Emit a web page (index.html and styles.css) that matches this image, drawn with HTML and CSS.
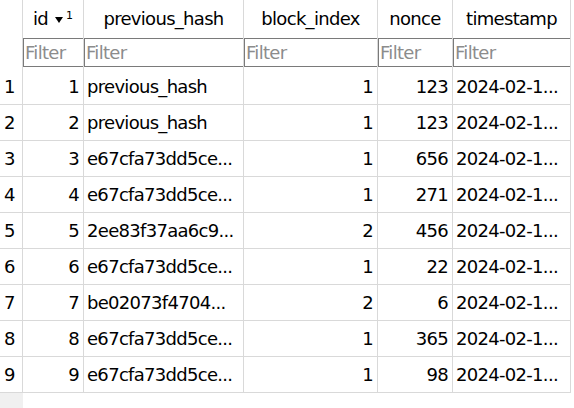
FILE: index.html
```html
<!DOCTYPE html>
<html>
<head>
<meta charset="utf-8">
<link rel="stylesheet" href="styles.css">
</head>
<body>
<div class="grid">
  <div class="row head">
    <div class="c c0"></div>
    <div class="c c1 hc">id <svg class="sort" width="8" height="6" viewBox="0 0 8 6"><path d="M0 0H8L4 6Z" fill="#000"/></svg><span class="sup">1</span></div>
    <div class="c c2 hc">previous_hash</div>
    <div class="c c3 hc">block_index</div>
    <div class="c c4 hc">nonce</div>
    <div class="c c5 hc">timestamp</div>
  </div>
  <div class="row filt">
    <div class="c c0"></div>
    <div class="c c1 fc"><span class="fbox">Filter</span></div>
    <div class="c c2 fc"><span class="fbox">Filter</span></div>
    <div class="c c3 fc"><span class="fbox">Filter</span></div>
    <div class="c c4 fc"><span class="fbox">Filter</span></div>
    <div class="c c5 fc"><span class="fbox">Filter</span></div>
  </div>
  <div class="row data"><div class="c c0 rh">1</div><div class="c c1 num">1</div><div class="c c2">previous_hash</div><div class="c c3 num">1</div><div class="c c4 num">123</div><div class="c c5">2024-02-1...</div></div>
  <div class="row data"><div class="c c0 rh">2</div><div class="c c1 num">2</div><div class="c c2">previous_hash</div><div class="c c3 num">1</div><div class="c c4 num">123</div><div class="c c5">2024-02-1...</div></div>
  <div class="row data"><div class="c c0 rh">3</div><div class="c c1 num">3</div><div class="c c2">e67cfa73dd5ce...</div><div class="c c3 num">1</div><div class="c c4 num">656</div><div class="c c5">2024-02-1...</div></div>
  <div class="row data"><div class="c c0 rh">4</div><div class="c c1 num">4</div><div class="c c2">e67cfa73dd5ce...</div><div class="c c3 num">1</div><div class="c c4 num">271</div><div class="c c5">2024-02-1...</div></div>
  <div class="row data"><div class="c c0 rh">5</div><div class="c c1 num">5</div><div class="c c2">2ee83f37aa6c9...</div><div class="c c3 num">2</div><div class="c c4 num">456</div><div class="c c5">2024-02-1...</div></div>
  <div class="row data"><div class="c c0 rh">6</div><div class="c c1 num">6</div><div class="c c2">e67cfa73dd5ce...</div><div class="c c3 num">1</div><div class="c c4 num">22</div><div class="c c5">2024-02-1...</div></div>
  <div class="row data"><div class="c c0 rh">7</div><div class="c c1 num">7</div><div class="c c2">be02073f4704...</div><div class="c c3 num">2</div><div class="c c4 num">6</div><div class="c c5">2024-02-1...</div></div>
  <div class="row data"><div class="c c0 rh">8</div><div class="c c1 num">8</div><div class="c c2">e67cfa73dd5ce...</div><div class="c c3 num">1</div><div class="c c4 num">365</div><div class="c c5">2024-02-1...</div></div>
  <div class="row data"><div class="c c0 rh">9</div><div class="c c1 num">9</div><div class="c c2">e67cfa73dd5ce...</div><div class="c c3 num">1</div><div class="c c4 num">98</div><div class="c c5">2024-02-1...</div></div>
  <div class="row tail"><div class="c c0 gray"></div></div>
</div>
</body>
</html>
```
FILE: styles.css
```css
html, body {
  margin: 0;
  padding: 0;
  background: #ffffff;
}
body {
  font-family: "DejaVu Sans", Verdana, sans-serif;
  font-size: 18px;
  letter-spacing: -0.7px;
  color: #000;
  width: 574px;
  height: 408px;
  overflow: hidden;
}
.grid {
  display: flex;
  flex-direction: column;
}
.row {
  display: flex;
}
.c {
  box-sizing: border-box;
  border-right: 1px solid #d9d9d9;
  white-space: nowrap;
  overflow: hidden;
  display: flex;
  align-items: center;
}
.c0 { width: 23px; }
.c1 { width: 61px; }
.c2 { width: 160px; }
.c3 { width: 134px; }
.c4 { width: 75px; }
.c5 { width: 118px; }

.head { height: 37px; }
.hc { justify-content: center; }
.sort { margin-left: 7px; margin-top: 2px; }
.sup { font-size: 11px; margin-left: 3px; margin-top: -6px; letter-spacing: 0; }

.filt { height: 32px; }
.fc { padding: 1px 0 2px 0; align-items: stretch; }
.fbox {
  flex: 1;
  box-sizing: border-box;
  border: 1.5px solid #7a7a7a;
  color: #8c8c8c;
  padding-left: 1px;
  display: flex;
  align-items: center;
  margin-right: -1px;
}

.data { height: 36px; }
.data .c { border-bottom: 1px solid #d9d9d9; padding: 0 4px 0 3px; }
.data .c0 { padding-left: 4px; }
.num { justify-content: flex-end; }
.rh { justify-content: flex-start; }

.tail { height: 20px; }
.gray { background: #f0f0f0; border-right: none; }
```
